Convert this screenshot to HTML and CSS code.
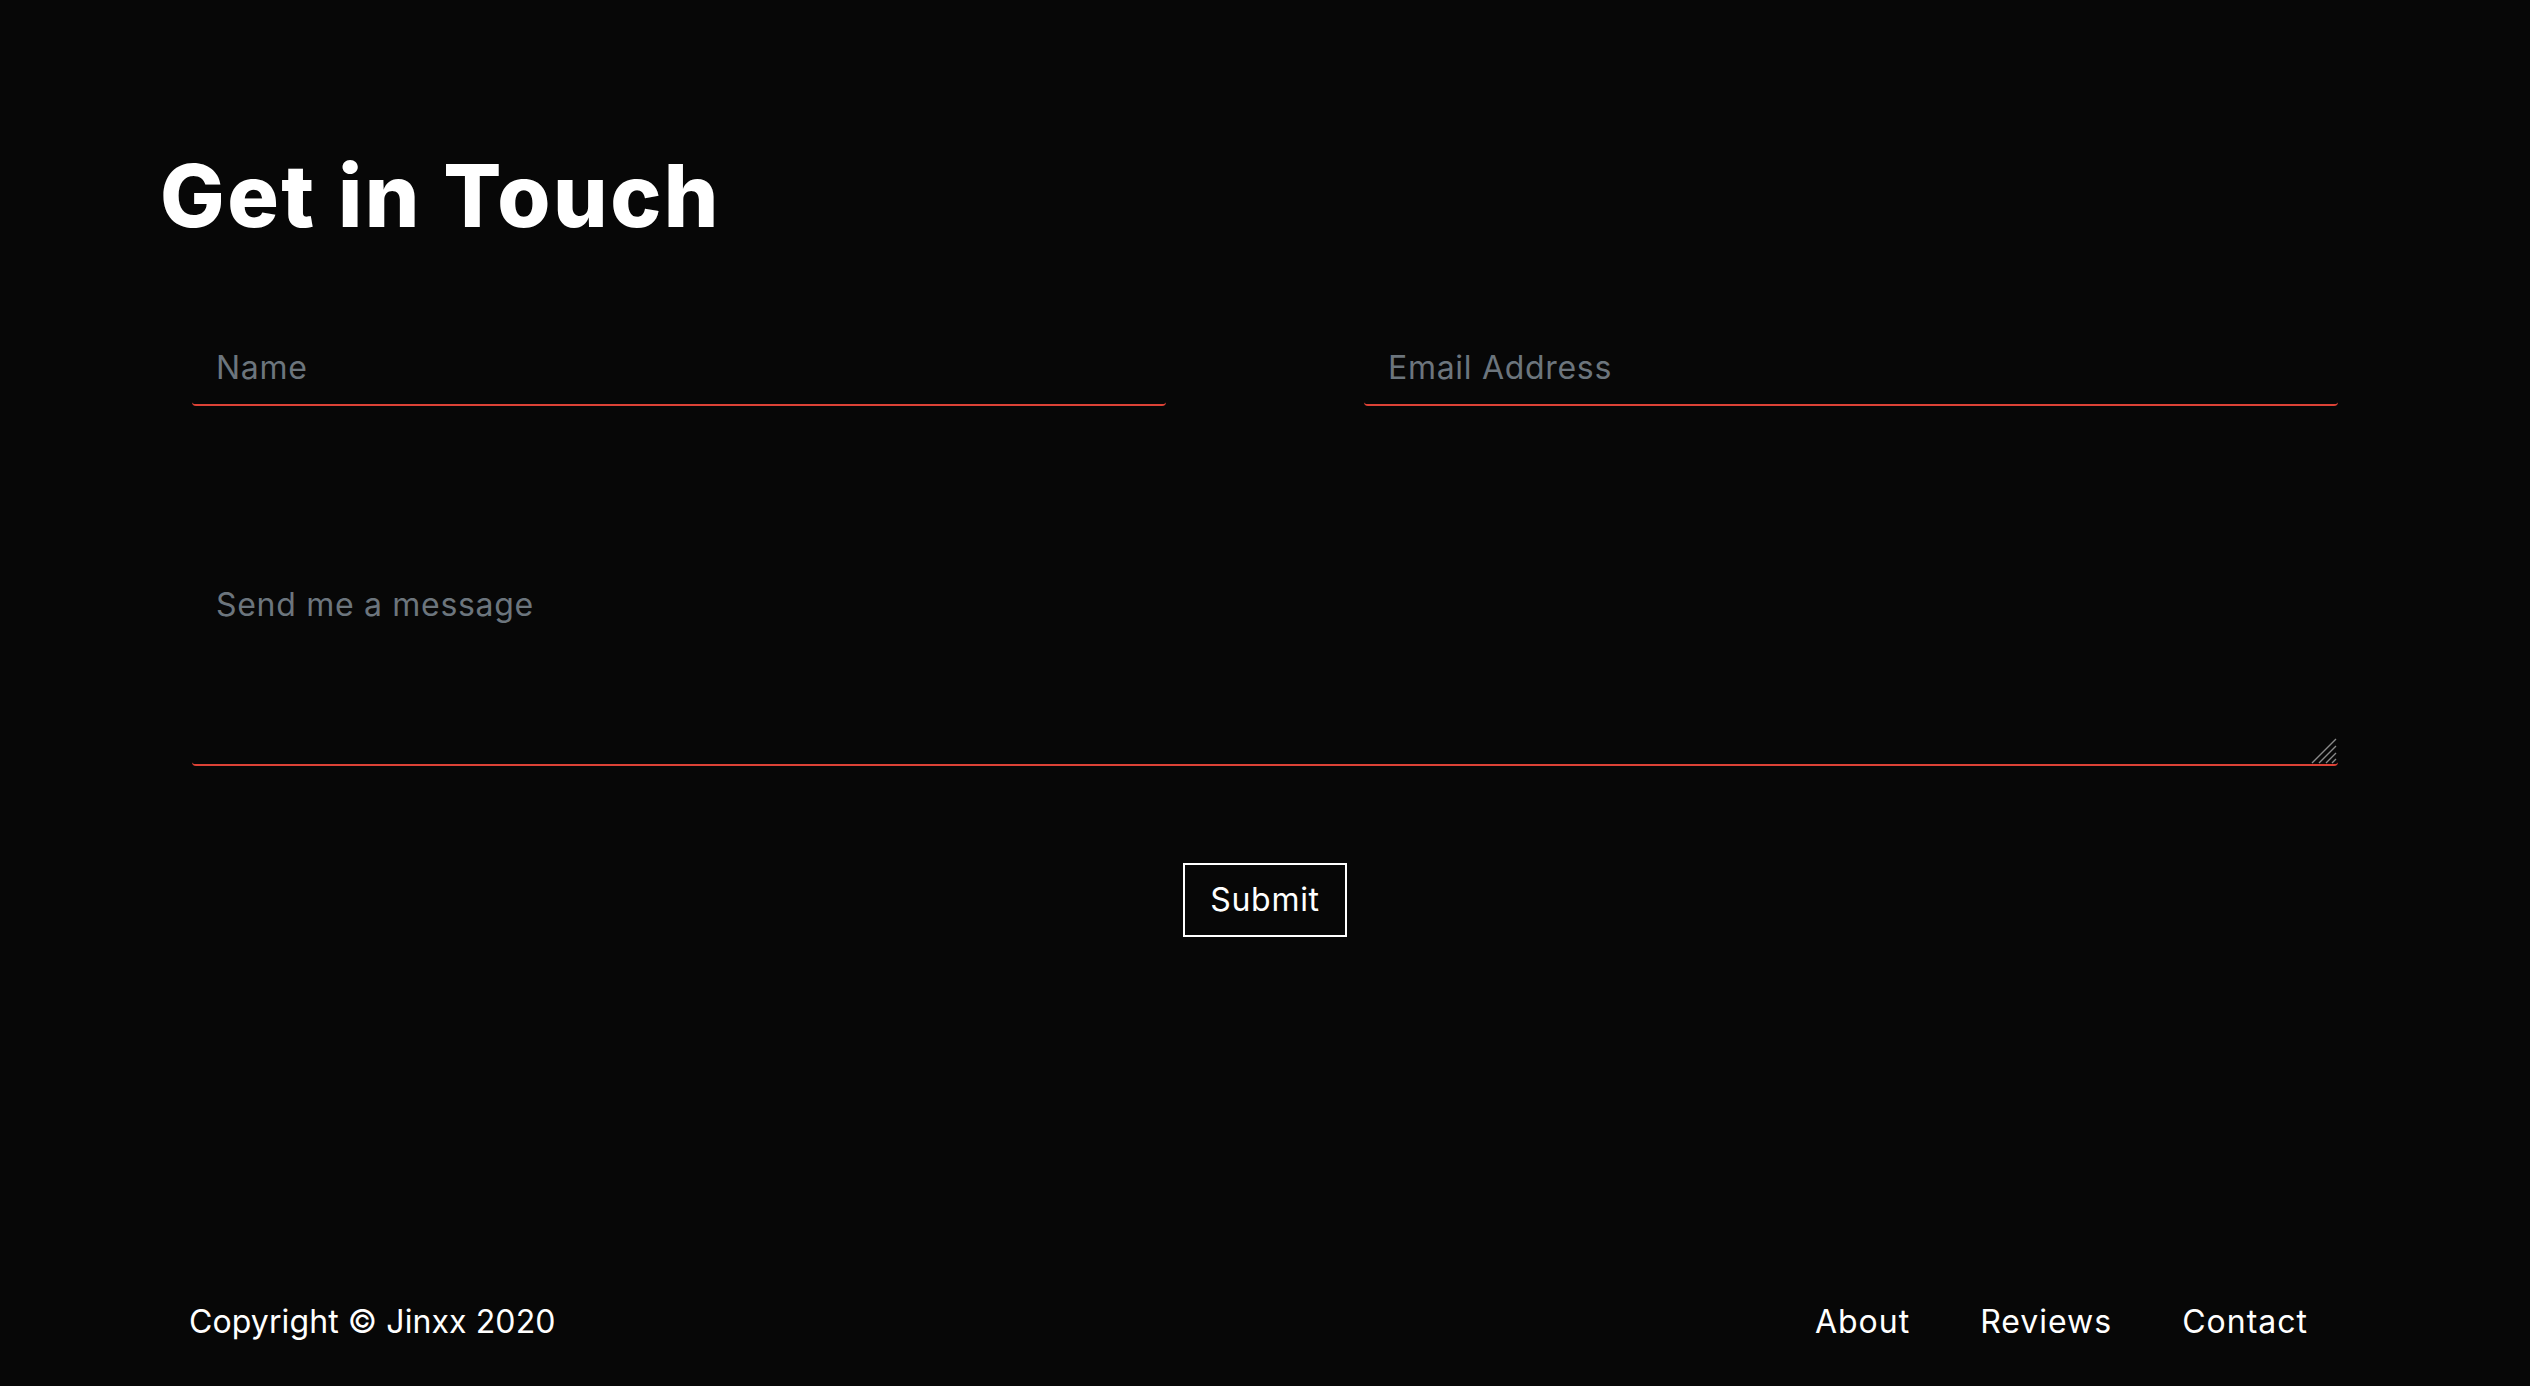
FILE: index.html
```html
<!DOCTYPE html>
<html lang="en">
<head>
<meta charset="utf-8">
<title>Get in Touch</title>
<link rel="stylesheet" href="styles.css">
</head>
<body>
<main class="contact">
  <h1 class="contact-title">Get in Touch</h1>
  <form class="contact-form">
    <div class="form-row">
      <input class="field" type="text" placeholder="Name">
      <input class="field" type="email" placeholder="Email Address">
    </div>
    <div class="message-wrap">
      <textarea class="field message" placeholder="Send me a message"></textarea>
      <svg class="grip" width="26" height="26" viewBox="0 0 26 26" aria-hidden="true">
        <path d="M1 25 L25 1 M8 25 L25 8 M15 25 L25 15 M21 25 L25 21" stroke="#8a8a8a" stroke-width="1.4" fill="none"/>
      </svg>
    </div>
    <div class="actions">
      <button class="submit" type="button">Submit</button>
    </div>
  </form>
</main>
<footer class="site-footer">
  <p class="copyright">Copyright © Jinxx 2020</p>
  <nav class="footer-nav">
    <a href="#">About</a>
    <a href="#">Reviews</a>
    <a href="#">Contact</a>
  </nav>
</footer>
</body>
</html>
```

FILE: styles.css
```css
html, body {
  margin: 0;
  padding: 0;
}

body {
  background: #070707;
  color: #ffffff;
  font-family: "Inter", "Noto Sans", sans-serif;
  min-height: 100vh;
  display: flex;
  flex-direction: column;
}

.contact {
  padding: 153px 160px 0;
}

.contact-title {
  margin: 0;
  font-size: 86px;
  line-height: 86px;
  font-weight: 800;
  letter-spacing: 2.5px;
}

.contact-form {
  padding: 0 32px;
  margin-top: 94px;
  display: flex;
  flex-direction: column;
}

.form-row {
  display: flex;
  justify-content: space-between;
}

.field {
  background: transparent;
  border: none;
  border-bottom: 2px solid #dc4236;
  border-radius: 4px;
  color: #ffffff;
  font-family: inherit;
  font-size: 32px;
  letter-spacing: 0.7px;
  padding: 15px 24px 17px;
  outline: none;
  box-sizing: border-box;
}

.form-row .field {
  width: 974px;
}

.field::placeholder {
  color: #6c757d;
  opacity: 1;
}

.message-wrap {
  position: relative;
  margin-top: 155px;
  display: flex;
}

.message {
  height: 205px;
  padding-top: 24px;
  width: 100%;
  resize: none;
}

.grip {
  position: absolute;
  right: 1px;
  bottom: 2px;
}

.actions {
  display: flex;
  justify-content: center;
  margin-top: 97px;
}

.submit {
  background: transparent;
  color: #ffffff;
  border: 2px solid #ffffff;
  font-family: inherit;
  font-size: 32px;
  letter-spacing: 0.7px;
  line-height: 48px;
  padding: 11px 25px;
  border-radius: 0;
  cursor: pointer;
}

.site-footer {
  margin-top: auto;
  display: flex;
  justify-content: space-between;
  align-items: center;
  padding: 0 222px 45px 189px;
  font-size: 32px;
  letter-spacing: 0.1px;
}

.copyright {
  margin: 0;
}

.footer-nav {
  display: flex;
  gap: 70px;
  letter-spacing: 1px;
}

.footer-nav a {
  color: #ffffff;
  text-decoration: none;
}
```
